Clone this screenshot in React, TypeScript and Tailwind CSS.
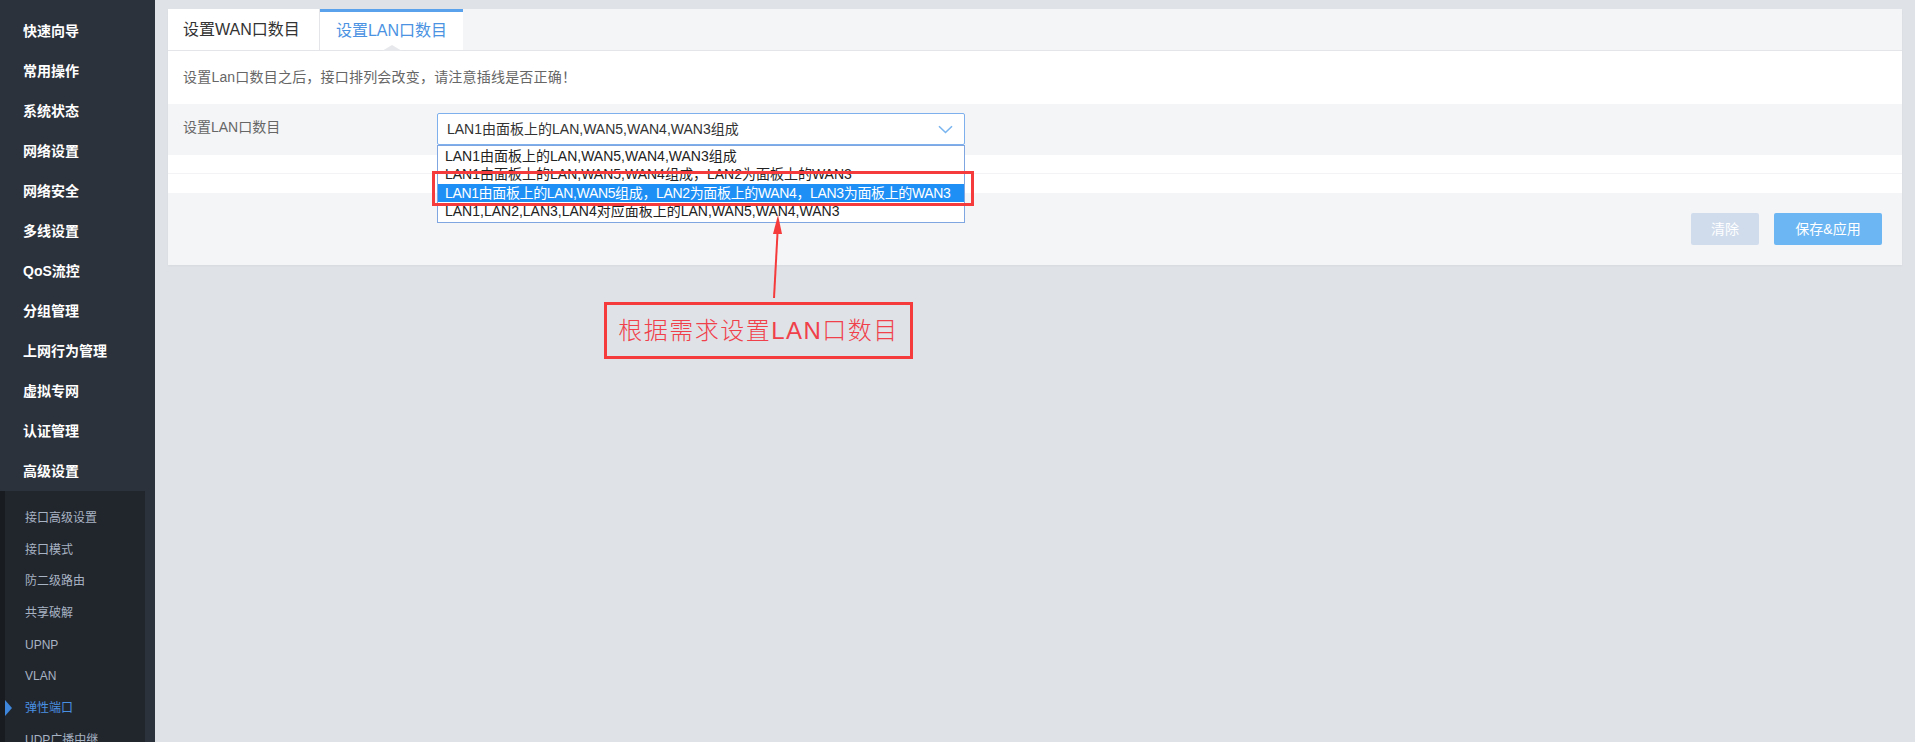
import React from "react"

const font = { fontFamily: '"Liberation Sans", "Noto Sans CJK SC", sans-serif' }

const mainMenu = [
  "快速向导",
  "常用操作",
  "系统状态",
  "网络设置",
  "网络安全",
  "多线设置",
  "QoS流控",
  "分组管理",
  "上网行为管理",
  "虚拟专网",
  "认证管理",
  "高级设置",
]

const subMenu = ["接口高级设置", "接口模式", "防二级路由", "共享破解", "UPNP", "VLAN", "弹性端口", "UDP广播中继"]

const options = [
  "LAN1由面板上的LAN,WAN5,WAN4,WAN3组成",
  "LAN1由面板上的LAN,WAN5,WAN4组成，LAN2为面板上的WAN3",
  "LAN1由面板上的LAN,WAN5组成，LAN2为面板上的WAN4，LAN3为面板上的WAN3",
  "LAN1,LAN2,LAN3,LAN4对应面板上的LAN,WAN5,WAN4,WAN3",
]

function Sidebar() {
  return (
    <aside className="w-[155px] shrink-0 bg-[#2c323b] h-full flex flex-col pt-[11px] overflow-hidden">
      {mainMenu.map((m) => (
        <div key={m} className="h-[40px] shrink-0 flex items-center pl-[23px] text-[14px] font-bold text-white">
          {m}
        </div>
      ))}
      <div className="flex shrink-0">
        <div className="w-[5px] bg-[#181c21]" />
        <div className="w-[140px] bg-[#21262d] pt-[11px]">
          {subMenu.map((s) => {
            const active = s === "弹性端口"
            return (
              <div
                key={s}
                className={
                  "relative h-[31.7px] flex items-center pl-[20px] text-[12px] " +
                  (active ? "text-[#4a90e2]" : "text-[#a8b3c3]")
                }
              >
                {active && (
                  <span className="absolute left-0 top-1/2 -translate-y-1/2 w-0 h-0 border-y-[8px] border-y-transparent border-l-[7px] border-l-[#3d86dc]" />
                )}
                {s}
              </div>
            )
          })}
        </div>
        <div className="w-[10px]" />
      </div>
    </aside>
  )
}

function Panel() {
  return (
    <div className="relative bg-white shadow-[0_1px_2px_rgba(0,0,0,0.04)]">
      {/* tabs */}
      <div className="flex h-[42px] bg-[#f4f5f7] border-b border-[#e3e5e9]">
        <div className="w-[152px] bg-white border-r border-[#e3e5e9] flex items-center pl-[15px] text-[16px] text-[#333]">
          设置WAN口数目
        </div>
        <div className="relative w-[143px] bg-white border-t-[3px] border-[#5aa3ec] flex items-center justify-center text-[16px] text-[#4b93e2]">
          设置LAN口数目
          <span className="absolute bottom-[-1px] left-1/2 -translate-x-1/2 w-0 h-0 border-x-[10px] border-x-transparent border-b-[6px] border-b-[#e6e8ec]" />
        </div>
      </div>

      {/* hint */}
      <div className="h-[53px] flex items-center pl-[15px] text-[14px] text-[#666] tracking-[0.2px]">
        设置Lan口数目之后，接口排列会改变，请注意插线是否正确！
      </div>

      {/* form row */}
      <div className="relative h-[51px] bg-[#f4f5f7] flex items-start">
        <div className="w-[269px] pl-[15px] pt-[13px] text-[14px] text-[#666]">设置LAN口数目</div>
        <div className="relative mt-[9px] w-[528px]">
          <div className="h-[32px] border border-[#7fb0ee] rounded-[2px] bg-white flex items-center justify-between pl-[9px] pr-[11px] text-[14px] text-[#333]">
            <span>{options[0]}</span>
            <svg width="15" height="9" viewBox="0 0 15 9" fill="none">
              <path d="M1 1.2l6.5 6.3 6.5-6.3" stroke="#7ab5f0" strokeWidth="1.6" />
            </svg>
          </div>
          {/* open list */}
          <div className="absolute z-10 left-0 top-[32px] w-[528px] bg-white border border-[#7fa6e0] pt-[1px] pb-[1px] text-[14px] leading-[18.4px] text-[#222]">
            {options.map((o, i) => (
              <div
                key={o}
                className={
                  "pl-[7px] whitespace-nowrap overflow-hidden " +
                  (i === 2 ? "bg-[#1e8ff5] text-white tracking-[-0.35px]" : "")
                }
              >
                {o}
              </div>
            ))}
          </div>
        </div>
      </div>

      {/* empty rows */}
      <div className="h-[19px] border-b border-[#f3f3f5]" />
      <div className="h-[19px]" />

      {/* footer */}
      <div className="h-[72px] bg-[#f4f5f7] flex justify-end items-start pt-[20px] pr-[20px] gap-[15px]">
        <button className="w-[68px] h-[32px] rounded-[2px] bg-[#d0dcec] text-white text-[14px]">清除</button>
        <button className="w-[108px] h-[32px] rounded-[2px] bg-[#6bb6f3] text-white text-[14px]">保存&应用</button>
      </div>
    </div>
  )
}

export default function App() {
  return (
    <div className="relative w-[1915px] h-[742px] flex overflow-hidden" style={font}>
      <Sidebar />
      <main className="flex-1 bg-[#dfe2e7] pt-[9px] pl-[13px] pr-[13px]">
        <Panel />
      </main>

      {/* annotation */}
      <div className="absolute left-[432px] top-[171px] w-[542px] h-[35px] border-[3px] border-[#f53b3b] z-20 pointer-events-none" />
      <svg className="absolute left-[760px] top-[212px] z-20" width="30" height="90" viewBox="0 0 30 90">
        <path d="M14 86 L18 12" stroke="#f53b3b" strokeWidth="2" />
        <path d="M18 3 L13 22 L22 22 Z" fill="#f53b3b" />
      </svg>
      <div className="absolute left-[604px] top-[302px] w-[309px] h-[57px] border-[3px] border-[#f53b3b] flex items-center justify-center text-[24px] font-light tracking-[1.5px] text-[#f0404a] z-20">
        根据需求设置LAN口数目
      </div>
    </div>
  )
}
